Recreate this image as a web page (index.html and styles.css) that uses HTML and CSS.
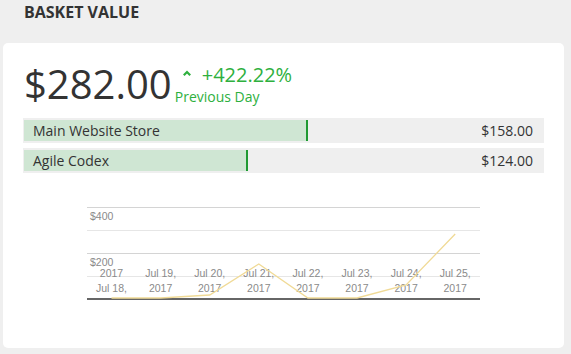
FILE: index.html
```html
<!DOCTYPE html>
<html lang="en">
<head>
  <meta charset="UTF-8">
  <meta name="viewport" content="width=device-width, initial-scale=1">
  <title>Basket Value</title>
  <link rel="stylesheet" href="styles.css">
</head>
<body>
  <h2 class="widget-title">BASKET VALUE</h2>

  <div class="card">
    <div class="summary">
      <div class="total">$282.00</div>
      <div class="change">
        <div class="change-pct"><svg class="arrow" width="8" height="6" viewBox="0 0 8 6"><path d="M0.8 5.2 L4 2 L7.2 5.2" fill="none" stroke="#2eb03e" stroke-width="2.2"/></svg>+422.22%</div>
        <div class="change-label">Previous Day</div>
      </div>
    </div>

    <div class="stores">
      <div class="store-row">
        <div class="store-bar" style="width: 282px"></div>
        <span class="store-name">Main Website Store</span>
        <span class="store-value">$158.00</span>
      </div>
      <div class="store-row">
        <div class="store-bar" style="width: 222px"></div>
        <span class="store-name">Agile Codex</span>
        <span class="store-value">$124.00</span>
      </div>
    </div>

    <svg class="chart" width="393" height="101" viewBox="0 0 393 101">
      <line x1="0" y1="7.5" x2="393" y2="7.5" stroke="#d4d4d4"/>
      <line x1="0" y1="30.5" x2="393" y2="30.5" stroke="#e6e6e6"/>
      <line x1="0" y1="53.5" x2="393" y2="53.5" stroke="#d4d4d4"/>
      <line x1="0" y1="76.5" x2="393" y2="76.5" stroke="#e6e6e6"/>
      <g class="axis-text">
        <text x="3" y="20">$400</text>
        <text x="3" y="66">$200</text>
      </g>
      <g class="axis-text" text-anchor="middle">
        <text x="24.5" y="77">2017</text>
        <text x="24.5" y="92">Jul 18,</text>
        <text x="73.6" y="77">Jul 19,</text>
        <text x="73.6" y="92">2017</text>
        <text x="122.7" y="77">Jul 20,</text>
        <text x="122.7" y="92">2017</text>
        <text x="171.8" y="77">Jul 21,</text>
        <text x="171.8" y="92">2017</text>
        <text x="220.9" y="77">Jul 22,</text>
        <text x="220.9" y="92">2017</text>
        <text x="270" y="77">Jul 23,</text>
        <text x="270" y="92">2017</text>
        <text x="319.1" y="77">Jul 24,</text>
        <text x="319.1" y="92">2017</text>
        <text x="368.2" y="77">Jul 25,</text>
        <text x="368.2" y="92">2017</text>
      </g>
      <line x1="0" y1="99" x2="393" y2="99" stroke="#666" stroke-width="2"/>
      <polyline points="24.5,98 73.6,98 122.7,95 171.8,64 220.9,98 270,98 319.1,85 368.2,34" fill="none" stroke="#f0da96" stroke-width="1.3"/>
    </svg>
  </div>
</body>
</html>
```

FILE: styles.css
```css
body {
  font-family: "Open Sans", "Liberation Sans", sans-serif;
  background-color: #efefef;
  margin: 0;
  padding: 0;
  color: #333;
}

.widget-title {
  font-size: 16px;
  font-weight: bold;
  line-height: 22px;
  margin: 1px 0 0 24px;
  color: #333;
}

.card {
  background-color: #fff;
  margin: 20px 7px 0 3px;
  padding: 21px 20px 47px 20px;
  border-radius: 5px;
}

.summary {
  display: flex;
  align-items: flex-end;
  padding-left: 1px;
}

.total {
  font-size: 40px;
  line-height: 40px;
  color: #333;
}

.change {
  margin-left: 3px;
  margin-bottom: -2px;
  color: #2eb03e;
}

.change-pct {
  font-size: 20px;
  line-height: 22px;
  margin-bottom: 2px;
}

.arrow {
  margin: 0 11px 6px 8px;
}

.change-label {
  font-size: 14px;
  line-height: 18px;
}

.stores {
  margin-top: 14px;
  display: flex;
  flex-direction: column;
  gap: 5px;
}

.store-row {
  position: relative;
  display: flex;
  justify-content: space-between;
  align-items: center;
  height: 25px;
  background-color: #efefef;
  padding: 0 11px 0 10px;
  font-size: 14px;
}

.store-bar {
  position: absolute;
  left: 1px;
  top: 2px;
  bottom: 2px;
  background-color: #cfe6d3;
  border-right: 2px solid #1f9a32;
}

.store-name,
.store-value {
  position: relative;
}

.chart {
  display: block;
  margin: 27px auto 0;
}

.axis-text {
  font-family: "Liberation Sans", Arial, sans-serif;
  font-size: 10.5px;
  fill: #8a8a8a;
}
```
